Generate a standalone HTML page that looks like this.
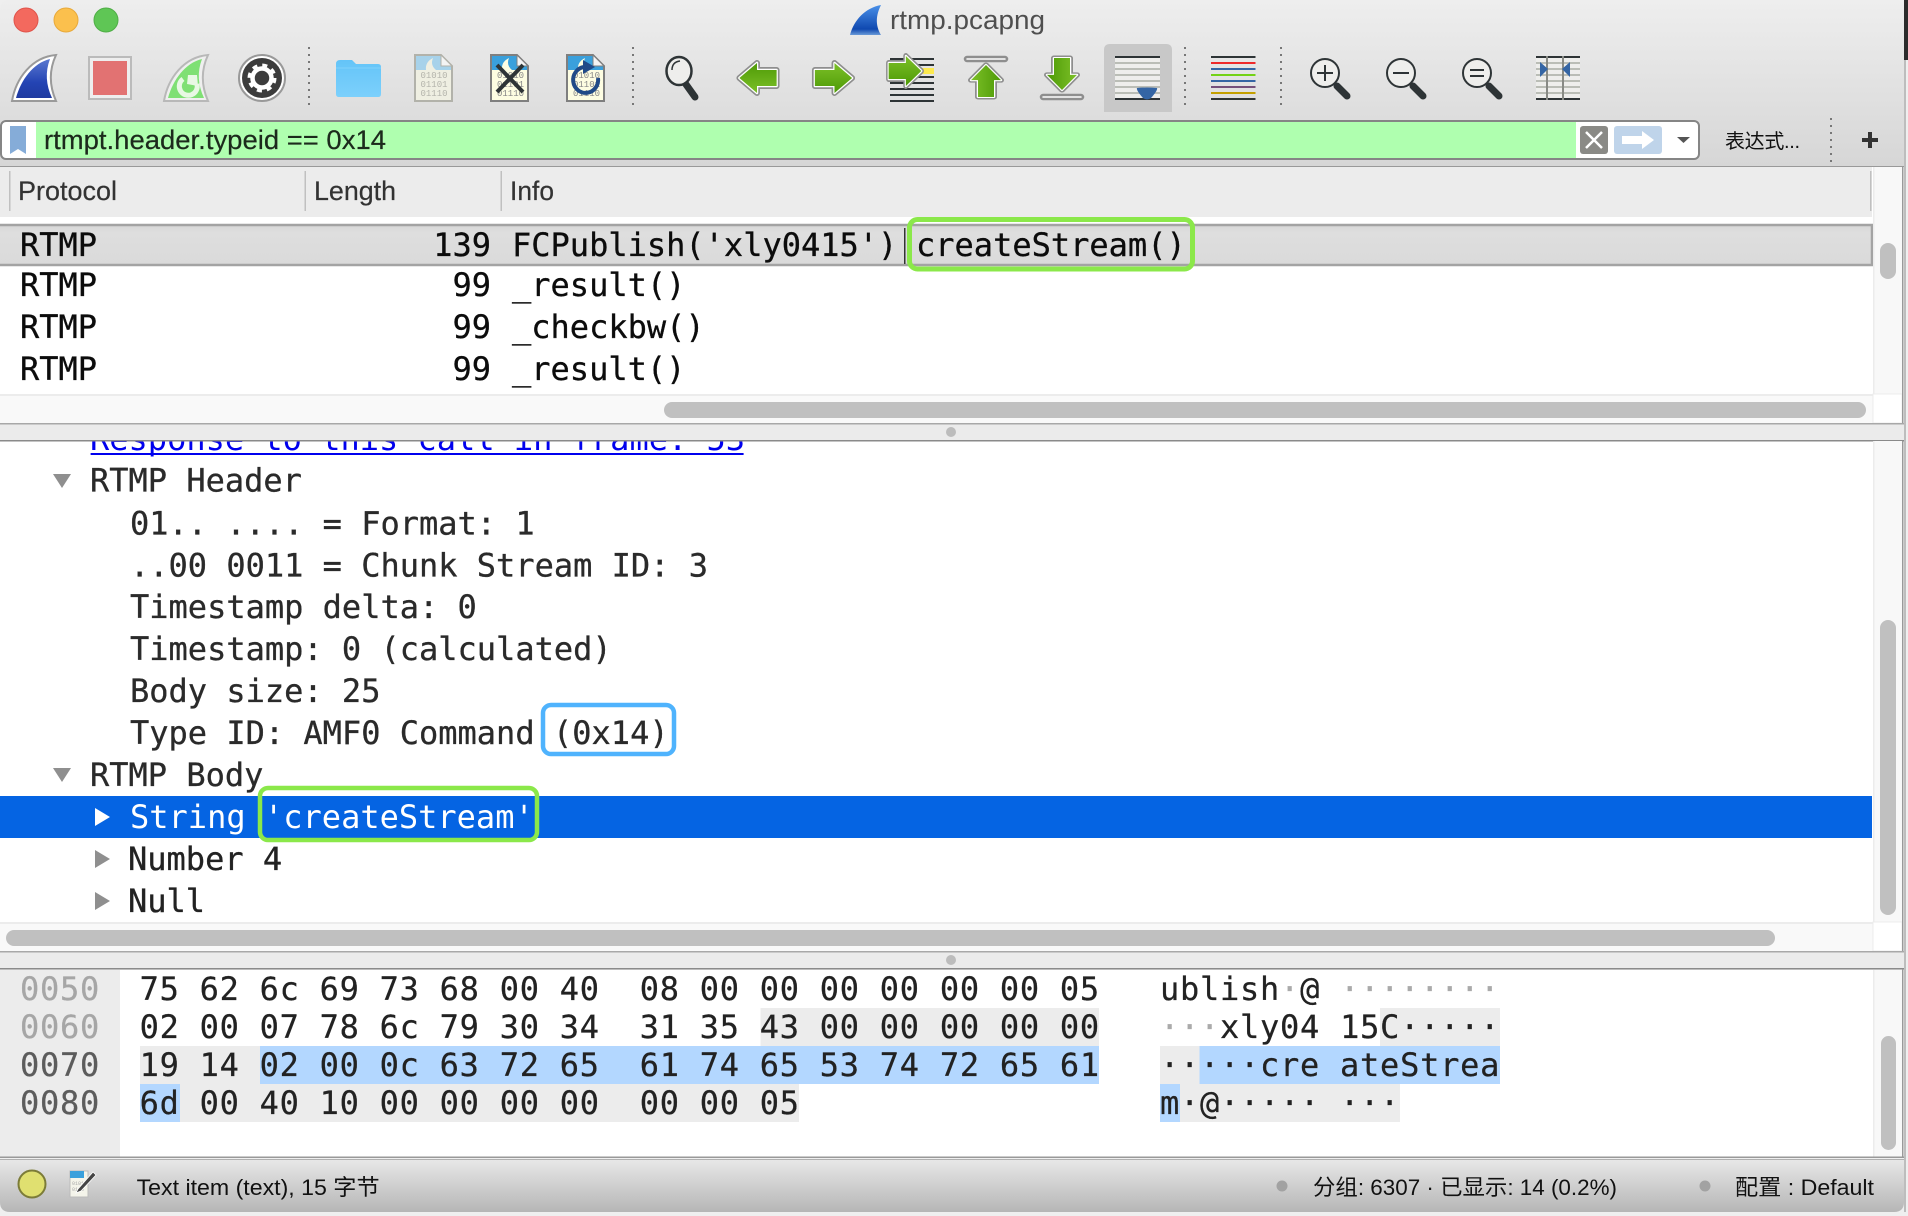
<!DOCTYPE html>
<html><head><meta charset="utf-8"><title>rtmp.pcapng</title>
<style>
html,body{margin:0;padding:0;background:#efefef;width:1908px;height:1216px;overflow:hidden}
svg{display:block;position:absolute;left:0;top:0}
text{white-space:pre}
.m{font-family:"DejaVu Sans Mono","Liberation Mono",monospace;font-size:32px}
.h{font-family:"DejaVu Sans Mono","Liberation Mono",monospace;font-size:32px;letter-spacing:0.74px;fill:#222;stroke:#222;stroke-width:.25px}
.s{font-family:"Liberation Sans","Noto Sans CJK SC",sans-serif}
</style></head><body>
<svg width="1908" height="1216" viewBox="0 0 1908 1216" xmlns="http://www.w3.org/2000/svg">
<defs>
<linearGradient id="tb" x1="0" y1="0" x2="0" y2="1"><stop offset="0" stop-color="#eeeeee"/><stop offset="1" stop-color="#d6d6d6"/></linearGradient>
<linearGradient id="st" x1="0" y1="0" x2="0" y2="1"><stop offset="0" stop-color="#e8e8e8"/><stop offset="1" stop-color="#b6b6b6"/></linearGradient>
<linearGradient id="bl" x1="0" y1="0" x2="0" y2="1"><stop offset="0" stop-color="#5a78d0"/><stop offset="0.6" stop-color="#2444b4"/><stop offset="1" stop-color="#1f3aa0"/></linearGradient>
<linearGradient id="ti" x1="0" y1="0" x2="0" y2="1"><stop offset="0" stop-color="#4a90e8"/><stop offset="0.8" stop-color="#0f48b0"/><stop offset="1" stop-color="#6a9ad8"/></linearGradient>
<linearGradient id="fo" x1="0" y1="0" x2="0" y2="1"><stop offset="0" stop-color="#64c4f8"/><stop offset="1" stop-color="#7cd0fc"/></linearGradient>
<linearGradient id="gr" x1="0" y1="0" x2="0" y2="1"><stop offset="0" stop-color="#7cc028"/><stop offset="1" stop-color="#4e9a06"/></linearGradient>
<linearGradient id="se" x1="0" y1="0" x2="0" y2="1"><stop offset="0" stop-color="#d6d6d6"/><stop offset="0.2" stop-color="#dedede"/><stop offset="1" stop-color="#dadada"/></linearGradient>
<path id="arr" d="M-19 -8 H1 V-15 L19 0 L1 15 V8 H-19 Z"/>
<g id="arrow">
<use href="#arr" fill="#8e8e8e" stroke="#8e8e8e" stroke-width="6" stroke-linejoin="round"/>
<use href="#arr" fill="#fff" stroke="#fff" stroke-width="2.5" stroke-linejoin="round"/>
<use href="#arr" fill="url(#gr)"/>
</g>
<g id="mag">
<line x1="12" y1="13" x2="22" y2="23" stroke="#2e3436" stroke-width="7" stroke-linecap="round"/>
<circle cx="0" cy="0" r="14" fill="#eeeeec" stroke="#2e3436" stroke-width="2"/>
</g>
</defs>

<!-- outside window -->
<rect x="1904" y="0" width="4" height="60" fill="#2c2c2c"/>
<rect x="1904" y="60" width="2" height="1152" fill="#bdbdbd"/>

<!-- title + toolbar bg -->
<path d="M10 0 H1894 Q1904 0 1904 10 V167 H0 V10 Q0 0 10 0 Z" fill="url(#tb)"/>

<!-- traffic lights -->
<circle cx="26" cy="20" r="12" fill="#f3695e" stroke="#e0534a" stroke-width="1"/>
<circle cx="66" cy="20" r="12" fill="#fbc04d" stroke="#e8a93a" stroke-width="1"/>
<circle cx="106" cy="20" r="12" fill="#5fc655" stroke="#4fae46" stroke-width="1"/>

<!-- title -->
<path d="M850 35 C854 20 865 8 881 5 C876 15 875 25 881 35 Z" fill="url(#ti)"/>
<text class="s" x="890" y="29" font-size="27" fill="#4f4f4f" textLength="155" lengthAdjust="spacingAndGlyphs">rtmp.pcapng</text>

<!-- shark start -->
<path d="M12 101 C16 78 32 57 56 55 C49 70 49 85 56 101 Z" fill="#fff" stroke="#9a9a9a" stroke-width="2"/>
<path d="M16 98 C21 80 33 63 50 59 C45 72 46 85 52 98 Z" fill="url(#bl)"/>
<!-- stop -->
<rect x="89" y="57" width="42" height="42" fill="#eeeeee" stroke="#bbbbbb" stroke-width="2"/>
<rect x="93" y="61" width="34" height="34" fill="#e27272"/>
<!-- restart -->
<path d="M164 101 C168 78 184 57 208 55 C201 70 201 85 208 101 Z" fill="#efefef" stroke="#b8b8b8" stroke-width="2"/>
<path d="M168 98 C173 80 185 63 202 59 C197 72 198 85 204 98 Z" fill="#7fe074"/>
<path d="M183 79 A9 9 0 1 0 197 84" fill="none" stroke="#e8f8e4" stroke-width="5"/>
<path d="M188 75 H197 L198 86 L187 84 Z" fill="#e8f8e4"/>
<!-- options gear -->
<circle cx="262" cy="78" r="23" fill="#fff" stroke="#999" stroke-width="2"/>
<circle cx="262" cy="78" r="20" fill="#3c3c3c"/>
<circle cx="262" cy="78" r="12.5" fill="none" stroke="#fff" stroke-width="4" stroke-dasharray="4.9 4.9"/>
<circle cx="262" cy="78" r="9.5" fill="none" stroke="#fff" stroke-width="4.5"/>
<line x1="309" y1="47" x2="309" y2="109" stroke="#777" stroke-width="2" stroke-dasharray="2 5"/>
<!-- folder -->
<path d="M336 64 Q336 60 340 60 H352 L356 64 H378 Q381 64 381 67 V94 Q381 97 378 97 H339 Q336 97 336 94 Z" fill="url(#fo)"/>
<path d="M336 68 H381" stroke="#8ad8fc" stroke-width="1" opacity=".7"/>
<!-- file 1 -->
<path d="M415 55 H441 L452 66 V101 H415 Z" fill="#efefe2" stroke="#b2b2aa" stroke-width="2"/>
<path d="M416 56 H441 V66 H451 V70 H416 Z" fill="#a7d2ea"/>
<path d="M441 55 L452 66 H441 Z" fill="#f4f4f4" stroke="#b2b2aa" stroke-width="1"/>
<path d="M426 70 Q425 62 433 58 Q430 65 436 70 Z" fill="#efefe2"/>
<g font-family="Liberation Mono,monospace" font-size="9" fill="#b4b4ac"><text x="420.500" y="78">01010</text><text x="420.500" y="87">01101</text><text x="420.500" y="96">01110</text></g>
<!-- file 2 close -->
<path d="M491 55 H517 L528 66 V101 H491 Z" fill="#fdfde2" stroke="#7f7f7f" stroke-width="2"/>
<path d="M492 56 H517 V66 H527 V70 H492 Z" fill="#3aa0dc"/>
<path d="M517 55 L528 66 H517 Z" fill="#f4f4f4" stroke="#7f7f7f" stroke-width="1"/>
<path d="M502 70 Q501 62 509 58 Q506 65 512 70 Z" fill="#fdfde2"/>
<g font-family="Liberation Mono,monospace" font-size="9" fill="#888"><text x="497" y="78">01010</text><text x="497" y="87">01101</text><text x="497" y="96">01110</text></g>
<path d="M497 65 L523 92 M523 65 L497 92" stroke="#2e3436" stroke-width="4" fill="none"/>
<!-- file 3 reload -->
<path d="M567 55 H593 L604 66 V101 H567 Z" fill="#fdfde2" stroke="#7f7f7f" stroke-width="2"/>
<path d="M568 56 H593 V66 H603 V70 H568 Z" fill="#3aa0dc"/>
<path d="M593 55 L604 66 H593 Z" fill="#f4f4f4" stroke="#7f7f7f" stroke-width="1"/>
<path d="M578 70 Q577 62 585 58 Q582 65 588 70 Z" fill="#fdfde2"/>
<g font-family="Liberation Mono,monospace" font-size="9" fill="#888"><text x="573" y="78">01010</text><text x="573" y="87">01101</text><text x="573" y="96">01110</text></g>
<path d="M598 78 A12.500 13 0 1 1 584 67" fill="none" stroke="#204a87" stroke-width="4"/>
<path d="M583 60 L595 67 L583 74 Z" fill="#204a87"/>
<line x1="633" y1="47" x2="633" y2="109" stroke="#777" stroke-width="2" stroke-dasharray="2 5"/>

<!-- find -->
<line x1="685" y1="83" x2="695" y2="97" stroke="#2e3436" stroke-width="7" stroke-linecap="round"/>
<ellipse cx="679" cy="71" rx="12.500" ry="14" fill="#eeeeec" stroke="#2e3436" stroke-width="2.5"/>
<path d="M672 70 Q672 62 680 61" fill="none" stroke="#2e3436" stroke-width="1.5"/>
<!-- prev / next -->
<use href="#arrow" transform="translate(758 78) rotate(180) scale(.98 1)"/>
<use href="#arrow" transform="translate(833.5 78) scale(.98 1)"/>
<!-- goto -->
<g fill="#2e3436"><rect x="890" y="58" width="44" height="2"/><rect x="890" y="64" width="44" height="2"/><rect x="890" y="76" width="44" height="2"/><rect x="890" y="82" width="44" height="2"/><rect x="890" y="88" width="44" height="2"/><rect x="890" y="94" width="44" height="2"/><rect x="890" y="100" width="44" height="2"/></g>
<rect x="920" y="68" width="14" height="6" fill="#fce94f"/>
<use href="#arrow" transform="translate(905 71) scale(.86 1)"/>
<!-- first -->
<rect x="965" y="57" width="42" height="4" rx="2" fill="#fff" stroke="#8e8e8e" stroke-width="2.500"/>
<use href="#arrow" transform="translate(986 81) rotate(-90) scale(.84 1)"/>
<!-- last -->
<use href="#arrow" transform="translate(1062 74) rotate(90) scale(.84 1)"/>
<rect x="1041" y="95" width="42" height="4" rx="2" fill="#fff" stroke="#8e8e8e" stroke-width="2.500"/>
<!-- autoscroll -->
<path d="M1110 44 H1166 Q1172 44 1172 50 V112 H1104 V50 Q1104 44 1110 44 Z" fill="#c8c8c8"/>
<rect x="1115" y="56" width="45" height="44" fill="#eeeeec"/>
<rect x="1115" y="56" width="45" height="2" fill="#2e3436"/>
<g fill="#babdb6"><rect x="1115" y="62" width="45" height="2"/><rect x="1115" y="68" width="45" height="2"/><rect x="1115" y="74" width="45" height="2"/><rect x="1115" y="80" width="45" height="2"/><rect x="1115" y="86" width="45" height="2"/><rect x="1115" y="92" width="45" height="2"/></g>
<rect x="1115" y="98" width="45" height="2" fill="#2e3436"/>
<path d="M1137 88 Q1147 87 1157 88 Q1158 90 1151 98 Q1147 101 1143 98 Q1136 90 1137 88 Z" fill="#3465a4"/>
<line x1="1185" y1="47" x2="1185" y2="109" stroke="#777" stroke-width="2" stroke-dasharray="2 5"/>
<!-- colorize -->
<rect x="1211" y="56" width="44.500" height="2" fill="#2e3436"/>
<rect x="1211" y="62" width="44.500" height="2" fill="#ee2a2a"/>
<rect x="1211" y="68" width="44.500" height="2" fill="#3465a4"/>
<rect x="1211" y="74" width="44.500" height="2" fill="#73d216"/>
<rect x="1211" y="80" width="44.500" height="2" fill="#3465a4"/>
<rect x="1211" y="86" width="44.500" height="2" fill="#75507b"/>
<rect x="1211" y="92" width="44.500" height="2" fill="#c4a000"/>
<rect x="1211" y="98" width="44.500" height="2" fill="#2e3436"/>
<line x1="1281" y1="47" x2="1281" y2="109" stroke="#777" stroke-width="2" stroke-dasharray="2 5"/>
<!-- zoom -->
<use href="#mag" transform="translate(1325 73)"/>
<path d="M1317 73 H1333 M1325 65 V81" stroke="#2e3436" stroke-width="2"/>
<use href="#mag" transform="translate(1401 73)"/>
<path d="M1393 73 H1409" stroke="#2e3436" stroke-width="2"/>
<use href="#mag" transform="translate(1477 73)"/>
<path d="M1470 70 H1484 M1470 76 H1484" stroke="#2e3436" stroke-width="2"/>
<!-- resize cols -->
<rect x="1536" y="56" width="44" height="44" fill="#eeeeec"/>
<rect x="1536" y="56" width="44" height="2" fill="#2e3436"/>
<g fill="#babdb6"><rect x="1536" y="62" width="44" height="2"/><rect x="1536" y="68" width="44" height="2"/><rect x="1536" y="74" width="44" height="2"/><rect x="1536" y="80" width="44" height="2"/><rect x="1536" y="86" width="44" height="2"/><rect x="1536" y="92" width="44" height="2"/></g>
<rect x="1536" y="98" width="44" height="2" fill="#2e3436"/>
<rect x="1546" y="56" width="2" height="44" fill="#888a85"/><rect x="1562" y="56" width="2" height="44" fill="#888a85"/>
<path d="M1540 62 L1548 69 L1540 77 Z" fill="#3465a4"/><path d="M1570 62 L1562 69 L1570 77 Z" fill="#3465a4"/>

<!-- filter bar -->
<rect x="1" y="121" width="1698" height="38" rx="5" fill="#fff" stroke="#858585" stroke-width="2"/>
<rect x="36" y="122" width="1540" height="36" fill="#afffaf"/>
<path d="M10 126 H26 V154 L18 149 L10 154 Z" fill="#85acd8"/>
<text class="s" x="44" y="149" font-size="27" fill="#1c2a1c" stroke="#1c2a1c" stroke-width=".2" textLength="342" lengthAdjust="spacingAndGlyphs">rtmpt.header.typeid == 0x14</text>
<rect x="1580" y="126" width="28" height="28" rx="3" fill="#8a8a86"/>
<path d="M1586 132 L1602 148 M1602 132 L1586 148" stroke="#fff" stroke-width="2.5"/>
<rect x="1614" y="126" width="48" height="28" rx="3" fill="#bfd4ea"/>
<path d="M1622 136 H1642 V131 L1654 140 L1642 149 V144 H1622 Z" fill="#fff"/>
<path d="M1677 137 H1690 L1683.500 143 Z" fill="#555"/>
<text class="s" x="1725" y="148" font-size="20" fill="#111" textLength="75" lengthAdjust="spacing">表达式...</text>
<line x1="1831" y1="118" x2="1831" y2="163" stroke="#777" stroke-width="2" stroke-dasharray="2 5"/>
<path d="M1862 140 H1878 M1870 132 V148" stroke="#333" stroke-width="4"/>

<!-- packet list -->
<rect x="0" y="166" width="1904" height="258" fill="#fff"/>
<rect x="0" y="166" width="1904" height="1" fill="#999"/>
<rect x="0" y="167" width="1872" height="50" fill="#ececec"/>
<rect x="9" y="171" width="1.500" height="40" fill="#c0c0c0"/><rect x="304.500" y="171" width="1.500" height="40" fill="#c0c0c0"/><rect x="500.500" y="171" width="1.500" height="40" fill="#c0c0c0"/><rect x="1870" y="171" width="1.500" height="40" fill="#c0c0c0"/>
<text class="s" x="18" y="200" font-size="26.500" fill="#333" stroke="#333" stroke-width=".2" textLength="99" lengthAdjust="spacingAndGlyphs">Protocol</text>
<text class="s" x="314" y="200" font-size="26.500" fill="#333" stroke="#333" stroke-width=".2" textLength="82" lengthAdjust="spacingAndGlyphs">Length</text>
<text class="s" x="510" y="200" font-size="26.500" fill="#333" stroke="#333" stroke-width=".2" textLength="44" lengthAdjust="spacingAndGlyphs">Info</text>
<rect x="-4" y="225" width="1876" height="40" fill="url(#se)" stroke="#a3a3a3" stroke-width="2.500"/>
<g fill="#0c0c0c" stroke="#0c0c0c" stroke-width=".3">
<text class="m" x="20" y="256">RTMP</text><text class="m" x="433.200" y="256">139</text><text class="m" x="512" y="256">FCPublish('xly0415')</text>
<text class="m" x="916" y="256">createStream()</text>
<text class="m" x="20" y="296">RTMP</text><text class="m" x="452.500" y="296">99</text><text class="m" x="512" y="296">_result()</text>
<text class="m" x="20" y="338">RTMP</text><text class="m" x="452.500" y="338">99</text><text class="m" x="512" y="338">_checkbw()</text>
<text class="m" x="20" y="380">RTMP</text><text class="m" x="452.500" y="380">99</text><text class="m" x="512" y="380">_result()</text>
</g>
<rect x="904" y="228" width="1.500" height="36" fill="#333"/>
<rect x="909.500" y="219.500" width="283" height="49.500" rx="8" fill="none" stroke="#8be84a" stroke-width="5"/>
<!-- scroll col 1 -->
<rect x="1873" y="167" width="29" height="227" fill="#f8f8f8"/>
<rect x="1873" y="167" width="1.500" height="227" fill="#ececec"/>
<rect x="1880" y="243" width="16" height="36" rx="8" fill="#c0c0c0"/>
<rect x="0" y="394" width="1873" height="29" fill="#f9f9f9"/>
<rect x="0" y="394" width="1873" height="2" fill="#ececec"/>
<rect x="664" y="402" width="1202" height="16" rx="8" fill="#c0c0c0"/>
<rect x="1873" y="394" width="29" height="29" fill="#fff" stroke="#ececec" stroke-width="1"/>

<!-- tree -->
<rect x="0" y="441" width="1904" height="511" fill="#fff"/>
<text class="m" x="90" y="449.800" fill="#0000ee">Response to this call in frame: 53</text>
<rect x="90.600" y="453" width="653" height="2" fill="#0000ee"/>
<!-- splitter 1 -->
<rect x="0" y="423" width="1904" height="18" fill="#ebebeb"/>
<rect x="0" y="423" width="1904" height="1.500" fill="#a8a8a8"/>
<rect x="0" y="440" width="1904" height="1.500" fill="#8a8a8a"/>
<circle cx="951" cy="432" r="5" fill="#bcbcbc"/>
<path d="M53 474 H71 L62 488 Z" fill="#8f8f8f"/>
<path d="M53 768 H71 L62 782 Z" fill="#8f8f8f"/>
<g fill="#2a2a2a" stroke="#2a2a2a" stroke-width=".3">
<text class="m" x="90" y="491.700">RTMP Header</text>
<text class="m" x="130" y="534.400">01.. .... = Format: 1</text>
<text class="m" x="130" y="576.300">..00 0011 = Chunk Stream ID: 3</text>
<text class="m" x="130" y="618.200">Timestamp delta: 0</text>
<text class="m" x="130" y="660.100">Timestamp: 0 (calculated)</text>
<text class="m" x="130" y="702.200">Body size: 25</text>
<text class="m" x="130" y="743.900">Type ID: AMF0 Command</text>
<text class="m" x="553" y="743.900">(0x14)</text>
<text class="m" x="90" y="785.800">RTMP Body</text>
</g>
<rect x="543" y="705" width="131" height="49" rx="8" fill="none" stroke="#4fb3fd" stroke-width="4.500"/>
<rect x="0" y="796" width="1872" height="42" fill="#0564e3"/>
<text class="m" x="130" y="827.800" fill="#fff">String</text>
<text class="m" x="264" y="827.800" fill="#fff">'createStream'</text>
<rect x="260" y="788" width="277" height="52" rx="8" fill="none" stroke="#8be84a" stroke-width="4.500"/>
<path d="M95 808 L110 817 L95 826 Z" fill="#fff"/>
<path d="M95 850 L110 859 L95 868 Z" fill="#8f8f8f"/>
<path d="M95 892 L110 901 L95 910 Z" fill="#8f8f8f"/>
<g fill="#222" stroke="#222" stroke-width=".3">
<text class="m" x="128" y="869.800">Number 4</text>
<text class="m" x="128" y="911.800">Null</text>
</g>
<!-- scroll col 2 -->
<rect x="1873" y="441" width="29" height="481" fill="#f8f8f8"/>
<rect x="1873" y="441" width="1.500" height="481" fill="#ececec"/>
<rect x="1880" y="620" width="16" height="295" rx="8" fill="#c0c0c0"/>
<rect x="0" y="922" width="1873" height="29" fill="#f9f9f9"/>
<rect x="0" y="922" width="1873" height="2" fill="#ececec"/>
<rect x="6" y="930" width="1769" height="16" rx="8" fill="#c0c0c0"/>
<rect x="1873" y="922" width="29" height="29" fill="#fff" stroke="#ececec" stroke-width="1"/>

<!-- hex -->
<rect x="0" y="951" width="1904" height="18" fill="#ebebeb"/>
<rect x="0" y="951" width="1904" height="1.500" fill="#a8a8a8"/>
<rect x="0" y="968" width="1904" height="1.500" fill="#8a8a8a"/>
<circle cx="951" cy="960" r="5" fill="#bcbcbc"/>
<rect x="0" y="970" width="1904" height="187" fill="#fff"/>
<rect x="0" y="970" width="120" height="187" fill="#ececec"/>
<rect x="760.500" y="1008" width="338.500" height="38" fill="#ececec"/>
<rect x="140" y="1046" width="120" height="38" fill="#ececec"/>
<rect x="260" y="1046" width="839" height="38" fill="#b3d7ff"/>
<rect x="140" y="1084" width="40" height="38" fill="#b3d7ff"/>
<rect x="180" y="1084" width="619" height="38" fill="#ececec"/>
<rect x="1380" y="1008" width="120" height="38" fill="#ececec"/>
<rect x="1160" y="1046" width="40" height="38" fill="#ececec"/>
<rect x="1199.500" y="1046" width="300.500" height="38" fill="#b3d7ff"/>
<rect x="1160" y="1084" width="20" height="38" fill="#b3d7ff"/>
<rect x="1180" y="1084" width="220" height="38" fill="#ececec"/>
<text class="h" x="20" y="1000" style="fill:#a6a6a6;stroke:#a6a6a6">0050</text>
<text class="h" x="20" y="1038" style="fill:#a6a6a6;stroke:#a6a6a6">0060</text>
<text class="h" x="20" y="1076" style="fill:#5c5c5c;stroke:#5c5c5c">0070</text>
<text class="h" x="20" y="1114" style="fill:#5c5c5c;stroke:#5c5c5c">0080</text>
<text class="h" x="139.600" y="1000">75 62 6c 69 73 68 00 40  08 00 00 00 00 00 00 05</text>
<text class="h" x="139.600" y="1038">02 00 07 78 6c 79 30 34  31 35 43 00 00 00 00 00</text>
<text class="h" x="139.600" y="1076">19 14 02 00 0c 63 72 65  61 74 65 53 74 72 65 61</text>
<text class="h" x="139.600" y="1114">6d 00 40 10 00 00 00 00  00 00 05</text>
<text class="h" x="1160" y="1000">ublish<tspan style="fill:#aaa;stroke:#aaa">·</tspan>@ <tspan style="fill:#aaa;stroke:#aaa">········</tspan></text>
<text class="h" x="1160" y="1038"><tspan style="fill:#aaa;stroke:#aaa">···</tspan>xly04 15C·····</text>
<text class="h" x="1160" y="1076">·····cre ateStrea</text>
<text class="h" x="1160" y="1114">m·@····· ···</text>
<rect x="1873" y="970" width="29" height="187" fill="#f8f8f8"/>
<rect x="1873" y="970" width="1.500" height="187" fill="#ececec"/>
<rect x="1881" y="1036" width="15" height="114" rx="7.500" fill="#c0c0c0"/>
<rect x="1902" y="167" width="1.500" height="256" fill="#999"/>
<rect x="1902" y="441" width="1.500" height="510" fill="#999"/>
<rect x="1902" y="969" width="1.500" height="188" fill="#999"/>

<!-- status bar -->
<path d="M0 1159 H1904 V1202 Q1904 1212 1894 1212 H10 Q0 1212 0 1202 Z" fill="url(#st)"/>
<rect x="0" y="1156.500" width="1904" height="1.500" fill="#999"/>
<rect x="0" y="1159" width="1904" height="1" fill="#b0b0b0"/>
<ellipse cx="32" cy="1184" rx="13.500" ry="13.500" fill="#e0e070" stroke="#7c7c38" stroke-width="2"/>
<path d="M70 1171 H88 V1197 H70 Z" fill="#f4f4ea" stroke="#bbb" stroke-width="1"/>
<path d="M70 1171 H84 V1178 H70 Z" fill="#3aa0dc"/>
<g font-family="Liberation Mono,monospace" font-size="5" fill="#aaa"><text x="72" y="1185">0101</text><text x="72" y="1191">0110</text></g>
<path d="M78 1189 L93 1172 L96 1175 L81 1191 L76 1193 Z" fill="#444" stroke="#fff" stroke-width=".8"/>
<text class="s" x="136.600" y="1195" font-size="22" fill="#111" textLength="243" lengthAdjust="spacingAndGlyphs">Text item (text), 15 字节</text>
<circle cx="1282" cy="1186" r="5.500" fill="#a2a2a2"/>
<text class="s" x="1313" y="1195" font-size="22" fill="#111" textLength="304" lengthAdjust="spacingAndGlyphs">分组: 6307 · 已显示: 14 (0.2%)</text>
<circle cx="1705" cy="1186" r="5.500" fill="#a2a2a2"/>
<text class="s" x="1735" y="1195" font-size="22" fill="#111" textLength="139" lengthAdjust="spacingAndGlyphs">配置 : Default</text>
</svg>
</body></html>
